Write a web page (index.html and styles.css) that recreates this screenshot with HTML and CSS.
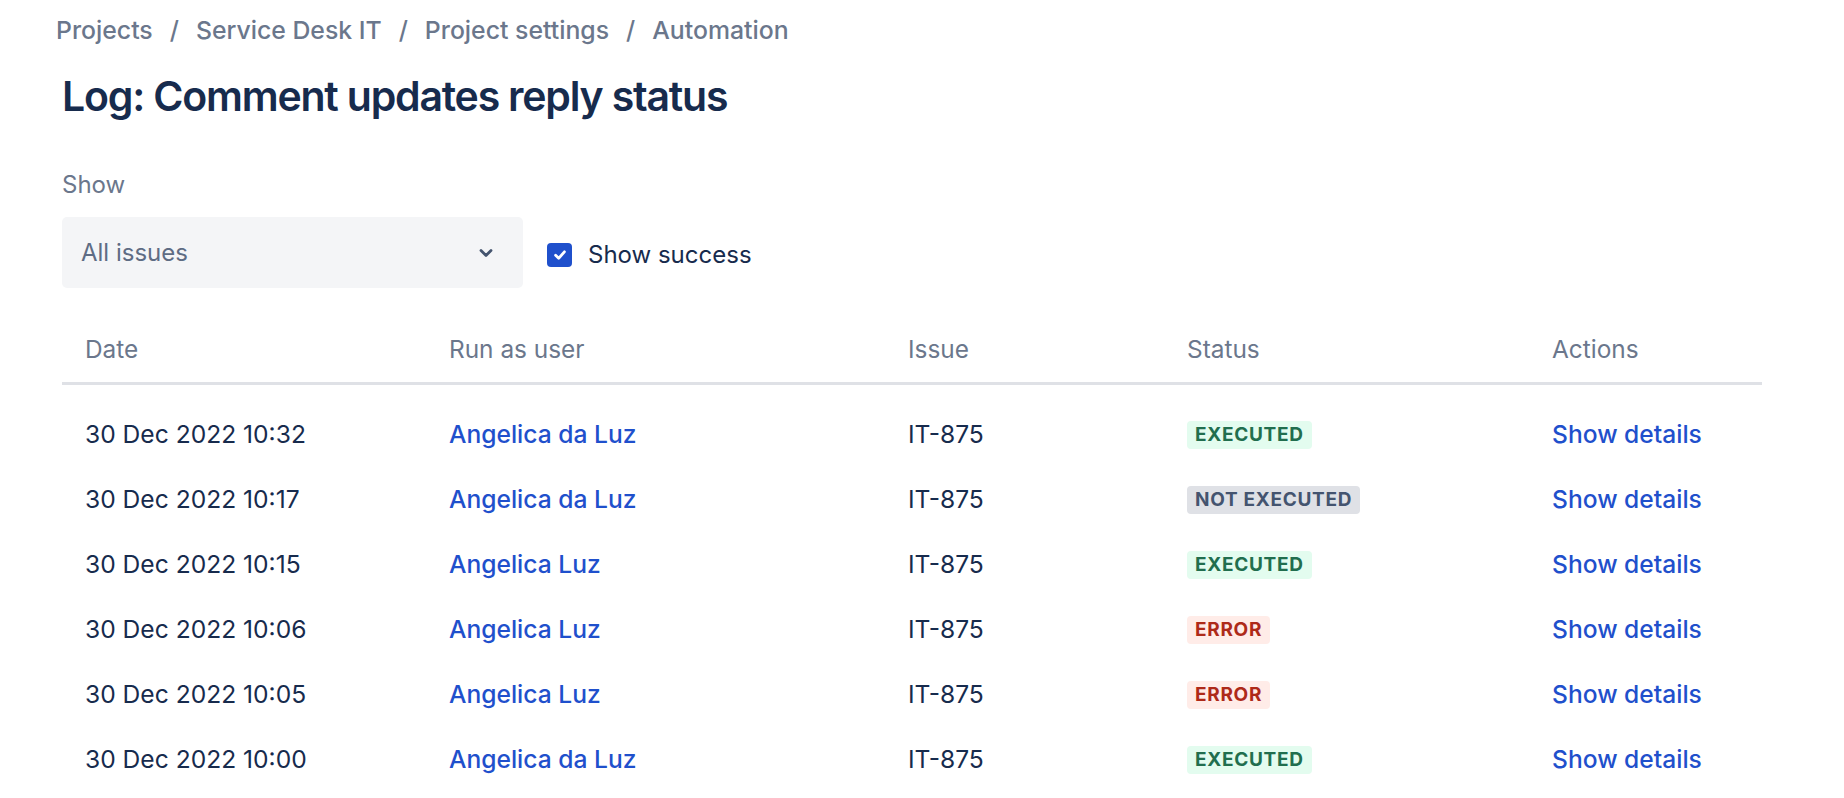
FILE: index.html
```html
<!DOCTYPE html>
<html lang="en">
<head>
<meta charset="utf-8">
<title>Log: Comment updates reply status</title>
<link rel="stylesheet" href="styles.css">
</head>
<body>
<main class="page">
  <nav class="breadcrumbs">
    <a class="crumb">Projects</a><span class="sep">/</span>
    <a class="crumb">Service Desk IT</a><span class="sep">/</span>
    <a class="crumb">Project settings</a><span class="sep">/</span>
    <a class="crumb">Automation</a>
  </nav>
  <h1 class="title">Log: Comment updates reply status</h1>

  <div class="filter-label">Show</div>
  <div class="filters">
    <div class="select">
      <span class="select-value">All issues</span>
      <svg class="chevron" width="14" height="10" viewBox="0 0 14 10"><path d="M2 2.5 L7 7.5 L12 2.5" fill="none" stroke="#44546f" stroke-width="2.8" stroke-linecap="round" stroke-linejoin="round"/></svg>
    </div>
    <label class="checkbox">
      <span class="box"><svg width="16" height="16" viewBox="0 0 16 16"><path d="M3.6 8.2 L6.7 11.3 L12.4 4.8" fill="none" stroke="#fff" stroke-width="2.8" stroke-linecap="round" stroke-linejoin="round"/></svg></span>
      <span class="checkbox-text">Show success</span>
    </label>
  </div>

  <div class="table">
    <div class="row head">
      <div class="cell">Date</div>
      <div class="cell">Run as user</div>
      <div class="cell">Issue</div>
      <div class="cell">Status</div>
      <div class="cell">Actions</div>
    </div>
    <div class="tbody">
      <div class="row">
        <div class="cell">30 Dec 2022 10:32</div>
        <div class="cell"><a class="link">Angelica da Luz</a></div>
        <div class="cell">IT-875</div>
        <div class="cell"><span class="lozenge success">Executed</span></div>
        <div class="cell"><a class="link">Show details</a></div>
      </div>
      <div class="row">
        <div class="cell">30 Dec 2022 10:17</div>
        <div class="cell"><a class="link">Angelica da Luz</a></div>
        <div class="cell">IT-875</div>
        <div class="cell"><span class="lozenge neutral">Not executed</span></div>
        <div class="cell"><a class="link">Show details</a></div>
      </div>
      <div class="row">
        <div class="cell">30 Dec 2022 10:15</div>
        <div class="cell"><a class="link">Angelica Luz</a></div>
        <div class="cell">IT-875</div>
        <div class="cell"><span class="lozenge success">Executed</span></div>
        <div class="cell"><a class="link">Show details</a></div>
      </div>
      <div class="row">
        <div class="cell">30 Dec 2022 10:06</div>
        <div class="cell"><a class="link">Angelica Luz</a></div>
        <div class="cell">IT-875</div>
        <div class="cell"><span class="lozenge error">Error</span></div>
        <div class="cell"><a class="link">Show details</a></div>
      </div>
      <div class="row">
        <div class="cell">30 Dec 2022 10:05</div>
        <div class="cell"><a class="link">Angelica Luz</a></div>
        <div class="cell">IT-875</div>
        <div class="cell"><span class="lozenge error">Error</span></div>
        <div class="cell"><a class="link">Show details</a></div>
      </div>
      <div class="row">
        <div class="cell">30 Dec 2022 10:00</div>
        <div class="cell"><a class="link">Angelica da Luz</a></div>
        <div class="cell">IT-875</div>
        <div class="cell"><span class="lozenge success">Executed</span></div>
        <div class="cell"><a class="link">Show details</a></div>
      </div>
    </div>
  </div>
</main>
</body>
</html>
```

FILE: styles.css
```css
* { box-sizing: border-box; }
html, body { margin: 0; padding: 0; background: #fff; }
body {
  font-family: Inter, "Noto Sans", "Liberation Sans", sans-serif;
  color: #172b4d;
  font-size: 24.6px;
}
.page {
  padding: 14px 0 0 62px;
  width: 1762px;
}
.breadcrumbs {
  display: flex;
  align-items: center;
  height: 32px;
  line-height: 32px;
  margin-left: -6px;
  font-size: 24.8px;
  font-weight: 500;
  color: #6b778c;
}
.crumb { color: #6b778c; text-decoration: none; }
.sep { margin: 0 17px; }
.title {
  margin: 24px 0 0 0;
  font-size: 41px;
  line-height: 52px;
  font-weight: 600;
  color: #172b4d;
  letter-spacing: -1.2px;
}
.filter-label {
  margin-top: 48px;
  height: 30px;
  line-height: 30px;
  font-size: 24px;
  color: #6b778c;
}
.filters {
  margin-top: 17px;
  display: flex;
  align-items: center;
  gap: 24px;
}
.select {
  width: 461px;
  height: 71px;
  background: #f4f5f7;
  border-radius: 5px;
  display: flex;
  align-items: center;
  justify-content: space-between;
  padding: 0 30px 0 19px;
}
.select-value { font-size: 24px; color: #5e6c84; }
.chevron { display: block; }
.checkbox {
  display: flex;
  align-items: center;
  gap: 16px;
  margin-top: 4px;
}
.box {
  width: 25px;
  height: 24px;
  border-radius: 4px;
  background: #1f50cc;
  display: flex;
  align-items: center;
  justify-content: center;
}
.box svg { display: block; }
.checkbox-text { font-size: 24px; color: #172b4d; }
.table { margin-top: 30px; width: 1700px; }
.row {
  display: grid;
  grid-template-columns: 364px 459px 279px 365px 233px;
  align-items: center;
  height: 65px;
}
.row.head {
  height: 67px;
  border-bottom: 3px solid #dfe1e6;
  color: #6b778c;
  font-size: 24.4px;
  align-items: center;
  padding-bottom: 2px;
}
.tbody { padding-top: 16px; }
.cell { padding-left: 23px; white-space: nowrap; }
.link { color: #1f50cc; font-weight: 500; text-decoration: none; }
.lozenge {
  display: inline-block;
  height: 28px;
  line-height: 28px;
  padding: 0 8px;
  border-radius: 4px;
  font-size: 19px;
  font-weight: 700;
  text-transform: uppercase;
  letter-spacing: 0.7px;
  vertical-align: middle;
}
.lozenge.success { background: #e3fcef; color: #216e4e; }
.lozenge.neutral { background: #dfe1e6; color: #44546f; }
.lozenge.error { background: #ffece8; color: #ae2a19; }
```
